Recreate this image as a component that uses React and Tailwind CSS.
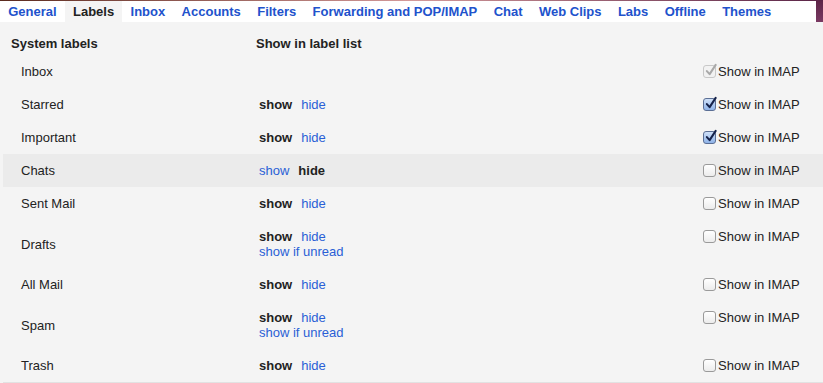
import React from "react";

const tabs = [
  "General",
  "Labels",
  "Inbox",
  "Accounts",
  "Filters",
  "Forwarding and POP/IMAP",
  "Chat",
  "Web Clips",
  "Labs",
  "Offline",
  "Themes",
];

const rows = [
  { name: "Inbox", mode: "none", imap: "locked" },
  { name: "Starred", mode: "show", imap: "on" },
  { name: "Important", mode: "show", imap: "on" },
  { name: "Chats", mode: "hide", imap: "off", active: true },
  { name: "Sent Mail", mode: "show", imap: "off" },
  { name: "Drafts", mode: "show", imap: "off", unread: true },
  { name: "All Mail", mode: "show", imap: "off" },
  { name: "Spam", mode: "show", imap: "off", unread: true },
  { name: "Trash", mode: "show", imap: "off" },
];

const Check = ({ state }) => {
  if (state === "off") {
    return (
      <span className="size-[13px] shrink-0 rounded-[3px] border border-[#9a9a9a] bg-gradient-to-b from-white to-[#ececec]" />
    );
  }

  const locked = state === "locked";

  return (
    <span
      className={
        locked
          ? "relative size-[13px] shrink-0 rounded-[3px] border border-[#c8c8c8] bg-[#f2f2f2]"
          : "relative size-[13px] shrink-0 rounded-[3px] border border-[#5b6f95] bg-gradient-to-b from-[#cfe0f8] to-[#8fb3e8]"
      }
    >
      <svg
        className="absolute -top-[3px] left-[1px]"
        height="14"
        viewBox="0 0 14 14"
        width="13"
      >
        <path
          d="M2 8.2 L5 11.5 L11.5 1.5"
          fill="none"
          stroke={locked ? "#a9a9a9" : "#15224a"}
          strokeLinecap="round"
          strokeLinejoin="round"
          strokeWidth="2.2"
        />
      </svg>
    </span>
  );
};

const LabelRow = ({ row }) => (
  <div
    className={
      row.active
        ? "grid grid-cols-[253px_447px_1fr] bg-[#ebebeb]"
        : "grid grid-cols-[253px_447px_1fr]"
    }
  >
    <div className="flex items-center pl-[18px]">{row.name}</div>
    <div className="py-[9px] pl-[3px]">
      {row.mode !== "none" && (
        <div className="flex gap-[9px]">
          {row.mode === "show" ? (
            <>
              <span className="font-bold">show</span>
              <span className="text-[#2a5fd6]">hide</span>
            </>
          ) : (
            <>
              <span className="text-[#2a5fd6]">show</span>
              <span className="font-bold">hide</span>
            </>
          )}
        </div>
      )}
      {row.unread && <div className="text-[#2a5fd6]">show if unread</div>}
      {row.mode === "none" && <div>&nbsp;</div>}
    </div>
    <div className="flex items-center gap-[2px] self-start py-[9px]">
      <Check state={row.imap} />
      <span>Show in IMAP</span>
    </div>
  </div>
);

export default function App() {
  return (
    <div className="h-[383px] w-[823px] overflow-hidden bg-[#f4f4f4] font-['Liberation_Sans',Arial,sans-serif] text-[13px] leading-[15px] text-[#222]">
      <div className="h-px bg-gradient-to-r from-[#5b2a1e] via-[#d49a9a] to-[#5a2447]" />
      <div className="flex h-[21px]">
        <div className="flex flex-1 bg-white">
          {tabs.map((tab) => (
            <div
              className={
                tab === "Labels"
                  ? "flex items-center bg-[#f4f4f4] px-[8.2px] font-bold text-[#222]"
                  : "flex items-center px-[8.2px] font-bold text-[#2152cc]"
              }
              key={tab}
            >
              {tab}
            </div>
          ))}
        </div>
        <div className="w-[7px] bg-gradient-to-b from-[#5e2548] to-[#7a3a63]" />
      </div>
      <div className="pl-[3px]">
        <div className="grid grid-cols-[253px_447px_1fr] pt-[14px] pb-[4px] font-bold">
          <div className="pl-[8px]">System labels</div>
          <div>Show in label list</div>
          <div />
        </div>
        <div className="border-b border-[#e2e2e2]">
          {rows.map((row) => (
            <LabelRow key={row.name} row={row} />
          ))}
        </div>
      </div>
    </div>
  );
}
